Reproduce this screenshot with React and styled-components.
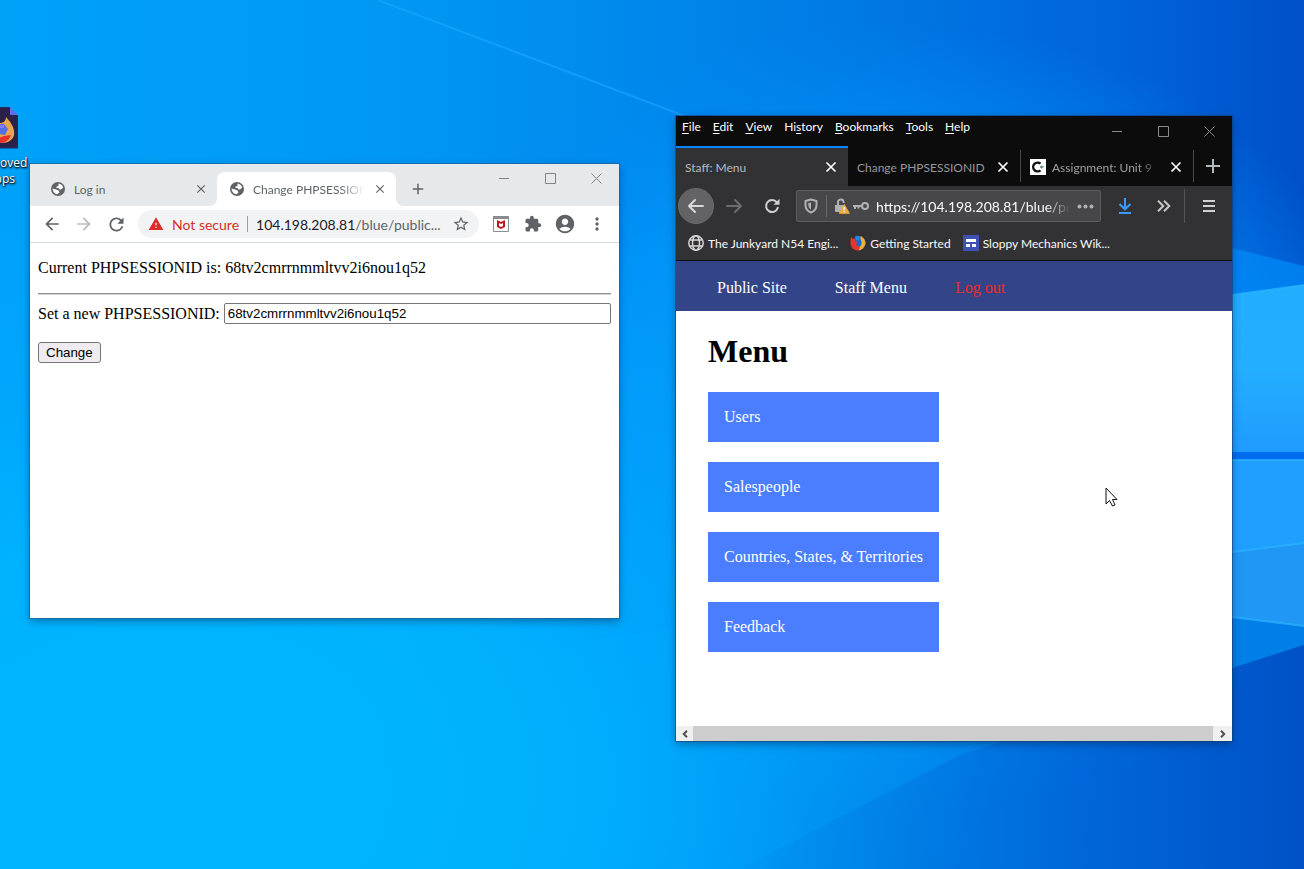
import React from "react";
import styled, { createGlobalStyle } from "styled-components";
import {
  MdArrowBack,
  MdArrowForward,
  MdRefresh,
  MdStarBorder,
  MdExtension,
  MdAccountCircle,
  MdMoreVert,
  MdWarning,
  MdClose,
  MdAdd,
} from "react-icons/md";

const ui = `"Segoe UI", Lato, "Open Sans", sans-serif`;
const serif = `"Liberation Serif", "Times New Roman", serif`;
const sans = `"Liberation Sans", Arial, sans-serif`;

const GlobalStyle = createGlobalStyle`
  *, *::before, *::after { box-sizing: border-box; }
  body { margin: 0; font-family: ${ui}; font-size: 12px; }
  button { font: inherit; color: inherit; background: none; border: 0; padding: 0; margin: 0; }
  a { color: inherit; text-decoration: none; }
  svg { display: block; flex: none; }
`;

const Desktop = styled.main`
  position: relative;
  min-height: 100vh;
  overflow: hidden;
  background: #0093f0;
`;

const WallpaperArt = styled.svg`
  position: absolute;
  inset: 0;
  width: 100%;
  height: 100%;
`;

const DesktopShortcut = styled.a`
  position: absolute;
  left: -36px;
  top: 107px;
  width: 74px;
  display: flex;
  flex-direction: column;
  align-items: center;
  gap: 6px;
  color: #fff;
  font-family: "Open Sans", sans-serif;
  line-height: 16px;
  text-align: center;
  text-shadow: 1px 1px 2px #000, 0 1px 2px #000;
`;

const Window = styled.section`
  position: absolute;
  display: flex;
  flex-direction: column;
`;

const ChromeWindow = styled(Window)`
  left: 30px;
  top: 164px;
  width: calc(50vw - 63px);
  min-height: 454px;
  background: #fff;
  color: #5f6368;
  box-shadow: 0 0 0 1px rgba(40, 90, 130, 0.55), 0 3px 8px rgba(0, 30, 70, 0.45);
`;

const FirefoxWindow = styled(Window)`
  left: calc(50vw + 24px);
  right: 72px;
  top: 116px;
  min-height: 625px;
  background: #fff;
  color: #f9f9fa;
  box-shadow: 0 0 0 1px rgba(20, 60, 110, 0.55), 0 3px 8px rgba(0, 30, 70, 0.45);
`;

const CaptionButtons = styled.div`
  display: flex;
  margin-left: auto;
  color: ${(p) => p.$color};
`;

const CaptionButton = styled.button`
  width: 46px;
  height: ${(p) => p.$height}px;
  display: grid;
  place-items: center;
`;

const IconButton = styled.button`
  width: ${(p) => p.$width || 32}px;
  height: 32px;
  flex: none;
  display: grid;
  place-items: center;
  color: ${(p) => p.$color || "inherit"};
`;

/* Chrome */

const ChromeTabStrip = styled.header`
  display: flex;
  height: 42px;
  padding-left: 8px;
  background: #e5e9ec;
`;

const ChromeTab = styled.div`
  position: relative;
  align-self: flex-end;
  width: 179px;
  height: 34px;
  padding: 0 8px 0 12px;
  display: flex;
  align-items: center;
  gap: 8px;
  border-radius: 8px 8px 0 0;
  background: ${(p) => (p.$active ? "#fff" : "transparent")};

  &::before,
  &::after {
    content: "";
    display: ${(p) => (p.$active ? "block" : "none")};
    position: absolute;
    bottom: 0;
    width: 8px;
    height: 8px;
  }
  &::before {
    right: 100%;
    background: radial-gradient(circle at 0 0, transparent 8px, #fff 8px);
  }
  &::after {
    left: 100%;
    background: radial-gradient(circle at 100% 0, transparent 8px, #fff 8px);
  }
`;

const TabTitle = styled.span`
  flex: 1;
  min-width: 0;
  overflow: hidden;
  white-space: nowrap;
  color: ${(p) => p.$color};
  mask-image: ${(p) => (p.$fade ? "linear-gradient(90deg, #000 calc(100% - 24px), transparent)" : "none")};
`;

const TabClose = styled.button`
  width: 16px;
  height: 16px;
  display: grid;
  place-items: center;
`;

const NewTab = styled.button`
  width: 28px;
  height: 28px;
  margin: 11px 0 0 8px;
  display: grid;
  place-items: center;
`;

const ChromeToolbar = styled.nav`
  display: flex;
  align-items: center;
  height: 37px;
  padding: 0 6px;
  border-bottom: 1px solid #d8dee0;
`;

const Omnibox = styled.div`
  flex: 1;
  min-width: 0;
  height: 28px;
  margin: 0 6px;
  padding: 0 2px 0 10px;
  display: flex;
  align-items: center;
  gap: 8px;
  border-radius: 14px;
  background: #f1f3f4;
  font-size: 14px;
`;

const NotSecure = styled.span`
  color: #d93025;
  white-space: nowrap;
`;

const Divider = styled.i`
  flex: none;
  width: 1px;
  height: ${(p) => p.$height}px;
  background: ${(p) => p.$color};
`;

const Address = styled.span`
  flex: 1;
  min-width: 0;
  white-space: nowrap;
  color: #5f6368;
`;

const Host = styled.span`
  color: #202124;
`;

const SessionPage = styled.div`
  padding: 16px 8px;
  font-family: ${serif};
  font-size: 16px;
  line-height: 18px;
  color: #000;
`;

const CurrentSession = styled.p`
  margin: 0;
`;

const Rule = styled.hr`
  margin: 16px 0 8px;
  border: 0;
  border-top: 1px solid #939393;
  border-bottom: 1px solid #d2d2d2;
`;

const SessionForm = styled.form`
  display: flex;
  flex-direction: column;
  align-items: flex-start;
  gap: 18px;
`;

const SessionField = styled.label`
  align-self: stretch;
  display: flex;
  align-items: center;
  gap: 4px;
  white-space: nowrap;
`;

const SessionInput = styled.input`
  flex: 1;
  min-width: 0;
  height: 21px;
  padding: 0 3px;
  border: 1px solid #767676;
  border-radius: 2px;
  font-family: ${sans};
  color: #000;
`;

const ChangeButton = styled.button`
  height: 21px;
  padding: 0 7px;
  border: 1px solid #767676;
  border-radius: 3px;
  background: #efebf0;
  font-family: ${sans};
  font-size: smaller;
  color: #000;
`;

/* Firefox */

const FirefoxTitleBar = styled.header`
  display: flex;
  justify-content: space-between;
  height: 30px;
  padding-left: 6px;
  background: #0c0c0d;
`;

const MenuBar = styled.nav`
  display: flex;
  gap: 12px;
  padding-top: 3px;
  line-height: 16px;
  color: #fff;

  u {
    text-underline-offset: 2px;
  }
`;

const FirefoxTabs = styled.div`
  display: flex;
  align-items: center;
  height: 40px;
  background: #0c0c0d;
`;

const FirefoxTab = styled.div`
  flex: 0 0 172px;
  height: 40px;
  padding: 0 9px;
  display: flex;
  align-items: center;
  gap: 6px;
  border-top: 2px solid ${(p) => (p.$active ? "#0a84ff" : "transparent")};
  background: ${(p) => (p.$active ? "#323234" : "transparent")};
`;

const FirefoxToolbar = styled.nav`
  display: flex;
  align-items: center;
  height: 40px;
  padding-left: 2px;
  background: #323234;
  color: #d2d0d0;
`;

const BackButton = styled.button`
  flex: none;
  width: 36px;
  height: 36px;
  border: 1px solid #6c6c6f;
  border-radius: 50%;
  background: #636366;
  display: grid;
  place-items: center;
`;

const UrlBar = styled.div`
  flex: 1;
  min-width: 0;
  height: 32px;
  margin: 0 5px;
  padding: 0 7px 0 6px;
  display: flex;
  align-items: center;
  gap: 7px;
  border: 1px solid #5c5c5e;
  border-radius: 2px;
  background: #474749;
  font-size: 14px;
  color: #b1b1b3;
`;

const SiteIdentity = styled.button`
  display: flex;
  align-items: center;
  gap: 3px;
`;

const UrlText = styled(TabTitle)`
  color: #f9f9fa;
`;

const Bookmarks = styled.nav`
  display: flex;
  align-items: center;
  gap: 12px;
  height: 35px;
  padding: 0 12px;
  border-bottom: 1px solid #0c0c0d;
  background: #323234;
`;

const Bookmark = styled.a`
  display: flex;
  align-items: center;
  gap: 4px;
  white-space: nowrap;
`;

const SiteNav = styled.nav`
  display: flex;
  align-items: center;
  gap: 48px;
  height: 50px;
  padding: 4px 41px 0;
  background: #334488;
  font: 16px/18px ${serif};
`;

const SiteLink = styled.a`
  color: ${(p) => (p.$danger ? "#ee2a22" : "#fff")};
`;

const MenuPage = styled.div`
  flex: 1;
  padding: 21px 32px;
  font: 16px/18px ${serif};
  color: #000;
`;

const PageTitle = styled.h1`
  margin: 0 0 22px;
  font-size: 32px;
  line-height: 38px;
`;

const MenuList = styled.ul`
  display: inline-flex;
  flex-direction: column;
  gap: 20px;
  margin: 0;
  padding: 0;
  list-style: none;
`;

const MenuLink = styled.a`
  display: block;
  padding: 16px;
  background: #4a7dff;
  color: #fff;
`;

const ScrollBar = styled.div`
  display: flex;
  height: 15px;
  background: #cdcdcd;
  justify-content: space-between;
`;

const ScrollArrow = styled.button`
  width: ${(p) => p.$width}px;
  background: #f0f0f0;
  display: grid;
  place-items: center;
`;

const Pointer = styled.svg`
  position: absolute;
  left: calc(50vw + 453px);
  top: 487px;
`;

const Wallpaper = () => (
  <WallpaperArt viewBox="0 0 1304 869" preserveAspectRatio="none" aria-hidden="true">
    <defs>
      <linearGradient id="sky" x1="0" y1="0" x2="1" y2="0">
        <stop offset="0" stopColor="#00a2f8" />
        <stop offset="0.3" stopColor="#0098f3" />
        <stop offset="0.5" stopColor="#0088eb" />
        <stop offset="0.7" stopColor="#0075e2" />
        <stop offset="0.88" stopColor="#0061d8" />
        <stop offset="1" stopColor="#0050c8" />
      </linearGradient>
      <radialGradient id="glow" gradientUnits="userSpaceOnUse" cx="0" cy="0" r="1" gradientTransform="translate(180 780) scale(940 640)">
        <stop offset="0" stopColor="#00b8ff" />
        <stop offset="0.4" stopColor="#00b2ff" stopOpacity="0.95" />
        <stop offset="0.7" stopColor="#00a8fc" stopOpacity="0.5" />
        <stop offset="1" stopColor="#00a0fa" stopOpacity="0" />
      </radialGradient>
      <radialGradient id="halo" gradientUnits="userSpaceOnUse" cx="0" cy="0" r="1" gradientTransform="translate(880 420) scale(520 400)">
        <stop offset="0" stopColor="#0aa0ff" />
        <stop offset="0.6" stopColor="#0096fb" stopOpacity="0.8" />
        <stop offset="1" stopColor="#0088f4" stopOpacity="0" />
      </radialGradient>
      <linearGradient id="corner" gradientUnits="userSpaceOnUse" x1="760" y1="0" x2="1304" y2="0">
        <stop offset="0" stopColor="#0078e0" stopOpacity="0.1" />
        <stop offset="0.6" stopColor="#0066d8" stopOpacity="0.75" />
        <stop offset="1" stopColor="#0052c6" />
      </linearGradient>
      <linearGradient id="pane" x1="0" y1="0" x2="0" y2="1">
        <stop offset="0" stopColor="#22adff" />
        <stop offset="0.5" stopColor="#24aeff" />
        <stop offset="1" stopColor="#1f9bff" />
      </linearGradient>
      <linearGradient id="floor" gradientUnits="userSpaceOnUse" x1="0" y1="0" x2="800" y2="0">
        <stop offset="0" stopColor="#00b6ff" stopOpacity="0.2" />
        <stop offset="0.8" stopColor="#00b0ff" stopOpacity="0.2" />
        <stop offset="1" stopColor="#00b0ff" stopOpacity="0" />
      </linearGradient>
    </defs>
    <rect width="1304" height="869" fill="url(#sky)" />
    <rect width="1304" height="869" fill="url(#halo)" />
    <rect width="1304" height="869" fill="url(#glow)" />
    <path d="M0 728 676 628 800 610V869H0Z" fill="url(#floor)" />
    <path d="M1304 645 1232 668 960 755 740 869H1304Z" fill="url(#corner)" />
    <path d="M378 0 690 118" stroke="#1aa8ff" strokeWidth="2" opacity="0.6" />
    <path d="M1200 240 1304 266V295H1200Z" fill="#008cfa" opacity="0.7" />
    <path d="M1232 295 1304 285V452H1232Z" fill="url(#pane)" />
    <path d="M1232 452H1304V460H1232Z" fill="#006cf0" />
    <path d="M1232 460H1304V543L1232 552Z" fill="#1f9fff" />
    <path d="M1232 552 1304 543V626L1232 617Z" fill="#2197f5" />
    <path d="M1232 617 1304 626V645L1232 668Z" fill="#007fe8" />
    <path d="M1232 295 1304 285M1232 552 1304 543M1232 617 1304 626M1232 460H1304" stroke="#2cb8ff" strokeWidth="2" opacity="0.7" fill="none" />
  </WallpaperArt>
);

const FirefoxDocument = () => (
  <svg width="34" height="42" viewBox="0 0 34 42" aria-hidden="true">
    <path d="M3 0H25L34 9V41H0V3Z" fill="#2b2048" stroke="#20327c" />
    <path d="M26 0 34 8H26Z" fill="#5a6ff5" />
    <path d="M17 16Q22 15 22 10 27 15 29 20 33 31 24 35 14 38 5 32L3 24 8 16Z" fill="#e9a54a" />
    <path d="M4 27Q12 33 20 29L27 28Q24 36 16 36 8 36 4 27Z" fill="#e9312f" />
    <path d="M10 17H20L24 22 21 28 14 27Z" fill="#536fe8" />
    <path d="M14 18H20V21H16Z" fill="#8b7cf4" />
  </svg>
);

const SiteGlobe = () => (
  <svg width="16" height="16" viewBox="0 0 16 16" aria-hidden="true">
    <circle cx="8" cy="8" r="7" fill="#5f6368" />
    <path d="M8.500 2.600Q12 3 13.200 6.500L11 8.500H9.500L8.500 7H6.500V5.500L8.500 5Z" fill="#fff" />
    <path d="M2.500 7.500 6 8.500 8.500 9.500 9.500 11.500 7.500 13.300Q3 12.700 2.500 7.500Z" fill="#fff" />
  </svg>
);

const Minimize = () => (
  <svg width="11" height="11" viewBox="0 0 11 11" aria-hidden="true">
    <path d="M0 5.500H10" stroke="currentColor" />
  </svg>
);
const Maximize = () => (
  <svg width="11" height="11" viewBox="0 0 11 11" aria-hidden="true">
    <path d="M.5 .5H10.500V10.500H.5Z" fill="none" stroke="currentColor" />
  </svg>
);
const CloseWindow = () => (
  <svg width="11" height="11" viewBox="0 0 11 11" aria-hidden="true">
    <path d="M.5 .5 10.500 10.500M10.500 .5 .5 10.500" stroke="currentColor" />
  </svg>
);

const WindowCaption = ({ height, color }) => (
  <CaptionButtons $color={color}>
    <CaptionButton $height={height} aria-label="Minimize"><Minimize /></CaptionButton>
    <CaptionButton $height={height} aria-label="Maximize"><Maximize /></CaptionButton>
    <CaptionButton $height={height} aria-label="Close"><CloseWindow /></CaptionButton>
  </CaptionButtons>
);

const ShieldExtension = () => (
  <svg width="16" height="16" viewBox="0 0 16 16" aria-hidden="true">
    <path d="M.5 .5H15.500V15.500H.5Z" fill="#fff" stroke="#8a8d90" />
    <path d="M0 0H16V3H0Z" fill="#8a8d90" />
    <path d="M4 4 8 6 12 4V11L8 13 4 11Z" fill="#c01818" />
    <path d="M6 7 8 8 10 7V10L8 11 6 10Z" fill="#fff" />
  </svg>
);

const CloseCross = () => (
  <svg width="12" height="12" viewBox="0 0 12 12" aria-hidden="true">
    <path d="M1.500 1.500 10.500 10.500M10.500 1.500 1.500 10.500" stroke="#fff" strokeWidth="1.700" />
  </svg>
);

const Arrow = ({ back, color }) => (
  <svg width="16" height="16" viewBox="0 0 16 16" fill="none" stroke={color} strokeWidth="2" strokeLinecap="round" strokeLinejoin="round" aria-hidden="true">
    <path d={back ? "M15 8H1M7 2 1 8 7 14" : "M1 8H15M9 2 15 8 9 14"} />
  </svg>
);

const Reload = () => (
  <svg width="16" height="16" viewBox="0 0 16 16" fill="none" aria-hidden="true">
    <path d="M12.800 4.300A6 6 0 1 0 13.800 9.800" stroke="#d2d0d0" strokeWidth="2" strokeLinecap="round" />
    <path d="M15.500 .8V6.800H9.500Z" fill="#d2d0d0" />
  </svg>
);

const TrackingShield = () => (
  <svg width="16" height="16" viewBox="0 0 16 16" fill="none" aria-hidden="true">
    <path d="M8 1.500 13.500 3V7Q13.500 12.500 8 14.500 2.500 12.500 2.500 7V3Z" stroke="#b1b1b3" strokeWidth="2" strokeLinejoin="round" />
    <path d="M8 4.500V11.500Q5.300 10 5.300 7V5Z" fill="#b1b1b3" />
  </svg>
);

const InsecureLock = () => (
  <svg width="16" height="16" viewBox="0 0 16 16" fill="none" aria-hidden="true">
    <path d="M4 7V4.500A2.800 2.800 0 0 1 9.600 4V5" stroke="#b1b1b3" strokeWidth="2" />
    <path d="M1 7H10V14H2Q1 14 1 13Z" fill="#b1b1b3" />
    <path d="M10.300 6.500 15.300 15.300H5.300Z" fill="#f0a93c" stroke="#f0a93c" strokeLinejoin="round" />
    <path d="M10.300 9V12M10.300 13V14.300" stroke="#fff" strokeWidth="1.400" />
  </svg>
);

const Key = () => (
  <svg width="16" height="16" viewBox="0 0 16 16" fill="none" stroke="#b1b1b3" strokeWidth="2" aria-hidden="true">
    <circle cx="12" cy="8" r="3" />
    <path d="M9 8H0M2 8V11M5.500 8V10.500" />
  </svg>
);

const Dots = () => (
  <svg width="17" height="5" viewBox="0 0 17 5" fill="#b1b1b3" aria-hidden="true">
    <circle cx="2.500" cy="2.500" r="2" />
    <circle cx="8.500" cy="2.500" r="2" />
    <circle cx="14.500" cy="2.500" r="2" />
  </svg>
);

const Download = () => (
  <svg width="16" height="16" viewBox="0 0 16 16" fill="none" stroke="#3a9bff" strokeWidth="2" aria-hidden="true">
    <path d="M8 0V11M2.500 6 8 11.300 13.500 6M2 15H14" />
  </svg>
);

const Chevrons = () => (
  <svg width="14" height="12" viewBox="0 0 14 12" fill="none" stroke="#c9c6c6" strokeWidth="2" aria-hidden="true">
    <path d="M1 .7 6.300 6 1 11.300M7 .7 12.300 6 7 11.300" />
  </svg>
);

const Hamburger = () => (
  <svg width="12" height="12" viewBox="0 0 12 12" stroke="#d2d0d0" strokeWidth="2" aria-hidden="true">
    <path d="M0 1H12M0 6H12M0 11H12" />
  </svg>
);

const Plus = () => (
  <svg width="14" height="14" viewBox="0 0 14 14" stroke="#b4b8bf" strokeWidth="2" aria-hidden="true">
    <path d="M7 0V14M0 7H14" />
  </svg>
);

const CourseIcon = () => (
  <svg width="16" height="16" viewBox="0 0 16 16" fill="none" aria-hidden="true">
    <path d="M0 0H16V16H0Z" fill="#fff" />
    <path d="M10.500 4.700A4.400 4.400 0 1 0 10.500 11.300" stroke="#111" strokeWidth="2.400" />
    <path d="M10 8H13.500M11.700 6.500V9.500" stroke="#6c8b86" strokeWidth="1.400" />
  </svg>
);

const GlobeIcon = () => (
  <svg width="16" height="16" viewBox="0 0 16 16" fill="none" stroke="#d6d4d4" strokeWidth="1.500" aria-hidden="true">
    <circle cx="8" cy="8" r="7.200" />
    <ellipse cx="8" cy="8" rx="3.500" ry="7.200" />
    <path d="M1.500 5H14.500M1.500 11H14.500" />
  </svg>
);

const FirefoxIcon = () => (
  <svg width="16" height="16" viewBox="0 0 16 16" aria-hidden="true">
    <circle cx="8" cy="8" r="6" fill="#1668c8" />
    <path d="M5 1.500Q8 0 11 2 9 3 9.500 5 8 6 6 5Z" fill="#1e8be8" />
    <path d="M1 2 3 4 5 3.500 5.500 6 8 7.500 6 9Q7 12 10 11 12 12 12 13 11 15.500 8 15.500 1.500 15 .5 9 .3 5 1 2Z" fill="#e2362e" />
    <path d="M11 1Q15.800 4 15.500 9 14 14.500 8.500 15.500 10 13 10 11 12 10 11.500 7 11 5 10.500 4 10 2 11 1Z" fill="#efad45" />
  </svg>
);

const WikiIcon = () => (
  <svg width="16" height="16" viewBox="0 0 16 16" aria-hidden="true">
    <path d="M0 0H16V16H0Z" fill="#3f51b5" />
    <path d="M3 4H13V7H3ZM3 9H7V12H3ZM9 9H13V12H9Z" fill="#fff" />
  </svg>
);

const ScrollChevron = ({ left }) => (
  <svg width="6" height="8" viewBox="0 0 6 8" fill="none" stroke="#505050" strokeWidth="2" aria-hidden="true">
    <path d={left ? "M5 .8 1.800 4 5 7.200" : "M1 .8 4.200 4 1 7.200"} />
  </svg>
);

const ChromeBrowser = () => (
  <ChromeWindow aria-label="Chrome">
    <ChromeTabStrip>
      <ChromeTab>
        <SiteGlobe />
        <TabTitle>Log in</TabTitle>
        <TabClose aria-label="Close tab"><MdClose size={14} /></TabClose>
      </ChromeTab>
      <ChromeTab $active>
        <SiteGlobe />
        <TabTitle $fade>Change PHPSESSIONID</TabTitle>
        <TabClose aria-label="Close tab"><MdClose size={14} /></TabClose>
      </ChromeTab>
      <NewTab aria-label="New tab"><MdAdd size={18} /></NewTab>
      <WindowCaption height={28} color="#808386" />
    </ChromeTabStrip>
    <ChromeToolbar aria-label="Chrome toolbar">
      <IconButton aria-label="Back"><MdArrowBack size={20} /></IconButton>
      <IconButton aria-label="Forward" $color="#b9bbbe"><MdArrowForward size={20} /></IconButton>
      <IconButton aria-label="Reload"><MdRefresh size={21} /></IconButton>
      <Omnibox>
        <MdWarning size={16} color="#e02a2a" />
        <NotSecure>Not secure</NotSecure>
        <Divider $height={16} $color="#9aa0a6" />
        <Address><Host>104.198.208.81</Host>/blue/public...</Address>
        <IconButton aria-label="Bookmark this page"><MdStarBorder size={18} /></IconButton>
      </Omnibox>
      <IconButton aria-label="Web protection"><ShieldExtension /></IconButton>
      <IconButton aria-label="Extensions"><MdExtension size={18} /></IconButton>
      <IconButton aria-label="Profile"><MdAccountCircle size={22} /></IconButton>
      <IconButton aria-label="Chrome menu"><MdMoreVert size={20} /></IconButton>
    </ChromeToolbar>
    <SessionPage>
      <CurrentSession>Current PHPSESSIONID is: 68tv2cmrrnmmltvv2i6nou1q52</CurrentSession>
      <Rule />
      <SessionForm onSubmit={(e) => e.preventDefault()}>
        <SessionField>
          Set a new PHPSESSIONID:
          <SessionInput type="text" defaultValue="68tv2cmrrnmmltvv2i6nou1q52" />
        </SessionField>
        <ChangeButton type="submit">Change</ChangeButton>
      </SessionForm>
    </SessionPage>
  </ChromeWindow>
);

const FirefoxBrowser = () => (
  <FirefoxWindow aria-label="Firefox">
    <FirefoxTitleBar>
      <MenuBar aria-label="Menu bar">
        <a href="#file"><u>F</u>ile</a>
        <a href="#edit"><u>E</u>dit</a>
        <a href="#view"><u>V</u>iew</a>
        <a href="#history">Hi<u>s</u>tory</a>
        <a href="#bookmarks"><u>B</u>ookmarks</a>
        <a href="#tools"><u>T</u>ools</a>
        <a href="#help"><u>H</u>elp</a>
      </MenuBar>
      <WindowCaption height={30} color="#8a8a8c" />
    </FirefoxTitleBar>
    <FirefoxTabs>
      <FirefoxTab $active>
        <TabTitle $color="#b9b9be">Staff: Menu</TabTitle>
        <TabClose aria-label="Close tab"><CloseCross /></TabClose>
      </FirefoxTab>
      <FirefoxTab>
        <TabTitle $color="#96969c">Change PHPSESSIONID</TabTitle>
        <TabClose aria-label="Close tab"><CloseCross /></TabClose>
      </FirefoxTab>
      <Divider $height={32} $color="#4c4a4a" />
      <FirefoxTab>
        <CourseIcon />
        <TabTitle $color="#a0a0a2" $fade>Assignment: Unit 9</TabTitle>
        <TabClose aria-label="Close tab"><CloseCross /></TabClose>
      </FirefoxTab>
      <Divider $height={32} $color="#4c4a4a" />
      <IconButton $width={38} aria-label="New tab"><Plus /></IconButton>
    </FirefoxTabs>
    <FirefoxToolbar aria-label="Firefox toolbar">
      <BackButton aria-label="Back"><Arrow back color="#d8d8da" /></BackButton>
      <IconButton $width={39} aria-label="Forward"><Arrow color="#6c6c6e" /></IconButton>
      <IconButton $width={38} aria-label="Reload"><Reload /></IconButton>
      <UrlBar>
        <TrackingShield />
        <Divider $height={22} $color="#6a6a6c" />
        <SiteIdentity aria-label="Site information">
          <InsecureLock />
          <Key />
        </SiteIdentity>
        <UrlText $fade>https://104.198.208.81/blue/public/staff</UrlText>
        <TabClose aria-label="Page actions"><Dots /></TabClose>
      </UrlBar>
      <IconButton $width={38} aria-label="Downloads"><Download /></IconButton>
      <IconButton $width={40} aria-label="More tools"><Chevrons /></IconButton>
      <Divider $height={34} $color="#545456" />
      <IconButton $width={47} aria-label="Open menu"><Hamburger /></IconButton>
    </FirefoxToolbar>
    <Bookmarks aria-label="Bookmarks">
      <Bookmark href="#junkyard"><GlobeIcon />The Junkyard N54 Engi...</Bookmark>
      <Bookmark href="#started"><FirefoxIcon />Getting Started</Bookmark>
      <Bookmark href="#sloppy"><WikiIcon />Sloppy Mechanics Wik...</Bookmark>
    </Bookmarks>
    <SiteNav aria-label="Site">
      <SiteLink href="#public">Public Site</SiteLink>
      <SiteLink href="#staff">Staff Menu</SiteLink>
      <SiteLink href="#logout" $danger>Log out</SiteLink>
    </SiteNav>
    <MenuPage>
      <PageTitle>Menu</PageTitle>
      <MenuList>
        {["Users", "Salespeople", "Countries, States, & Territories", "Feedback"].map((name) => (
          <li key={name}><MenuLink href="#menu">{name}</MenuLink></li>
        ))}
      </MenuList>
    </MenuPage>
    <ScrollBar>
      <ScrollArrow $width={17} aria-label="Scroll left"><ScrollChevron left /></ScrollArrow>
      <ScrollArrow $width={19} aria-label="Scroll right"><ScrollChevron /></ScrollArrow>
    </ScrollBar>
  </FirefoxWindow>
);

export default function App() {
  return (
    <>
      <GlobalStyle />
      <Desktop>
        <Wallpaper />
        <DesktopShortcut href="#removed-apps">
          <FirefoxDocument />
          <span>Removed Apps</span>
        </DesktopShortcut>
        <ChromeBrowser />
        <FirefoxBrowser />
        <Pointer width="13" height="20" viewBox="0 0 13 20" aria-hidden="true">
          <path d="M1 1V17L4.500 13.500 7.500 19 10 18 7.500 12.500H12Z" fill="#fff" stroke="#111" />
        </Pointer>
      </Desktop>
    </>
  );
}
